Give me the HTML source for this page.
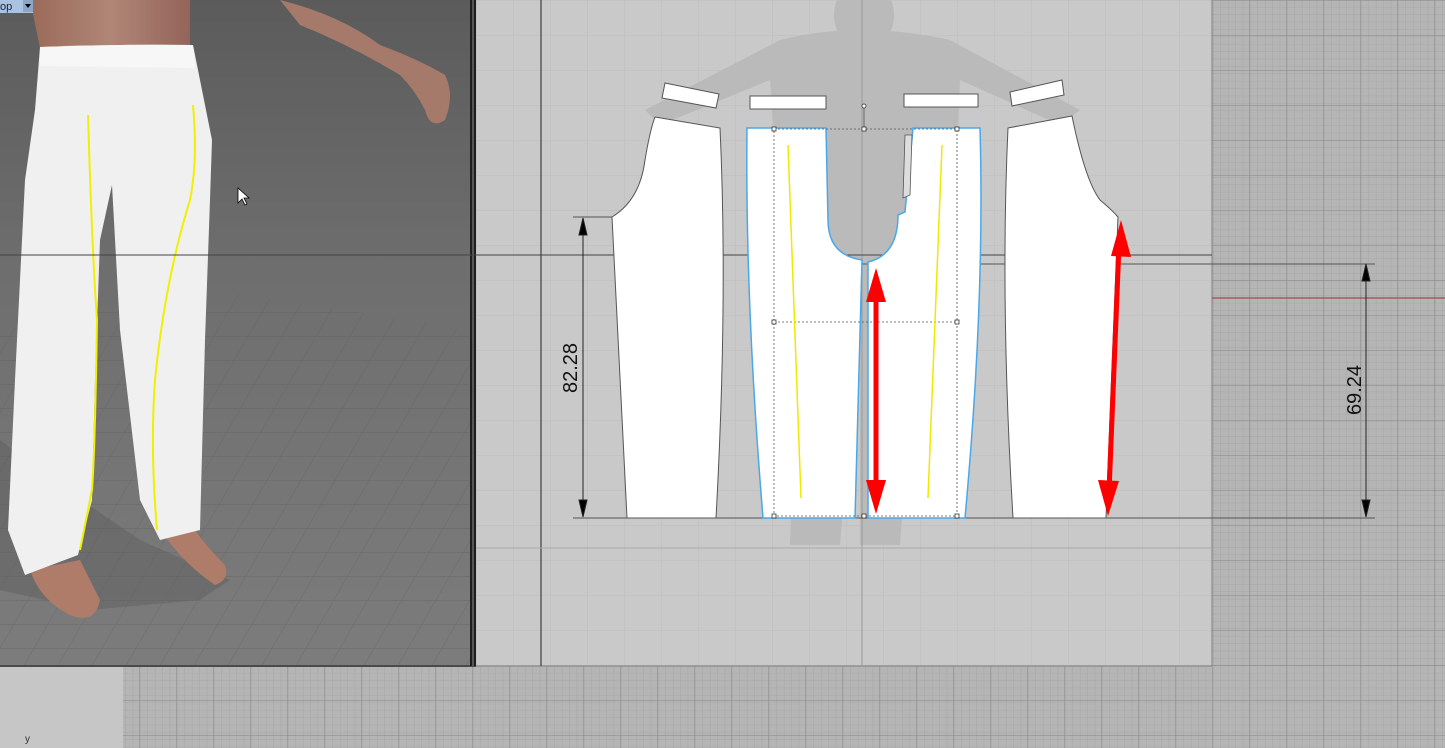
<!DOCTYPE html>
<html><head><meta charset="utf-8"><style>
html,body{margin:0;padding:0;width:1445px;height:748px;overflow:hidden;background:#c4c4c4}
svg{display:block}
</style></head><body>
<svg width="1445" height="748" viewBox="0 0 1445 748" xmlns="http://www.w3.org/2000/svg">
<defs>
<linearGradient id="bg3d" x1="0" y1="0" x2="0" y2="1">
<stop offset="0" stop-color="#5b5b5b"/><stop offset="0.4" stop-color="#6e6e6e"/><stop offset="1" stop-color="#7c7c7c"/>
</linearGradient>
<pattern id="fine" width="7.4" height="7.4" patternUnits="userSpaceOnUse">
<path d="M7.4 0V7.4M0 7.4H7.4" stroke="#9c9c9c" stroke-width="0.6" fill="none"/>
</pattern>
<pattern id="coarse" x="1212" y="0" width="37" height="35" patternUnits="userSpaceOnUse">
<path d="M0 0V35M0 0H37" stroke="#868686" stroke-width="1" fill="none"/>
</pattern>
<pattern id="light" x="476" y="0" width="37" height="35" patternUnits="userSpaceOnUse">
<path d="M0 0V35M0 0H37" stroke="#bdbdbd" stroke-width="1" fill="none"/>
</pattern>
<pattern id="floor" width="34" height="24" patternUnits="userSpaceOnUse" patternTransform="skewX(-30)">
<path d="M0 0V24M0 0H34" stroke="#5a5a5a" stroke-width="1" fill="none"/>
</pattern>
<linearGradient id="skin" x1="0" y1="0" x2="1" y2="0"><stop offset="0" stop-color="#9a6a58"/><stop offset="0.5" stop-color="#b08676"/><stop offset="1" stop-color="#94645a"/></linearGradient>
</defs>

<rect x="0" y="0" width="1445" height="748" fill="#b5b5b5"/>
<rect x="0" y="0" width="1445" height="748" fill="url(#fine)"/>
<rect x="0" y="0" width="1445" height="748" fill="url(#coarse)"/>
<rect x="0" y="666" width="123" height="82" fill="#c6c6c6"/>
<text x="25" y="742" font-family="Liberation Sans,sans-serif" font-size="10" fill="#333">y</text>

<!-- 3D viewport -->
<rect x="0" y="0" width="470" height="666" fill="url(#bg3d)"/>
<path d="M0 330 L220 290 L470 330 L470 666 L0 666Z" fill="url(#floor)" opacity="0.5"/>
<line x1="0" y1="666" x2="476" y2="666" stroke="#4a4a4a" stroke-width="2"/>
<path d="M30 0 L190 0 L190 45 L40 48Z" fill="url(#skin)"/>
<path d="M280 0 Q340 15 380 45 Q420 60 445 75 Q455 95 445 120 Q430 130 425 110 Q415 90 400 75 Q350 45 300 25Z" fill="#a57a6a"/>
<path d="M0 440 Q80 500 140 540 L230 580 L200 600 L90 610 L0 590Z" fill="#5e5e5e" opacity="0.45"/>
<path d="M30 570 Q40 600 70 615 Q95 625 100 600 Q90 580 80 560Z" fill="#b07c6a"/>
<path d="M160 530 Q185 565 215 585 Q230 580 225 565 Q205 545 195 530Z" fill="#b07c6a"/>
<path d="M40 47 Q115 44 193 45 L212 140 L210 200 L205 340 L200 530 L160 540 L140 500 L120 330 L112 185 L100 240 L95 380 L92 500 L78 555 L25 575 L8 530 L15 380 L25 180 L35 110Z" fill="#f0f0f0"/>
<path d="M40 47 Q115 44 193 45 L195 68 L40 66Z" fill="#f7f7f7"/>
<path d="M88 115 Q92 250 97 320 Q95 450 92 490 L80 550" stroke="#f0f000" stroke-width="2" fill="none"/>
<path d="M193 105 Q198 160 190 200 Q165 280 155 380 Q150 450 157 530" stroke="#f0f000" stroke-width="2" fill="none"/>
<path d="M238 188 L238 203 L242 199 L245 205 L247 204 L244 198 L249 198Z" fill="#fff" stroke="#000" stroke-width="0.8"/>
<rect x="0" y="0" width="33" height="13" fill="#a9c3e0"/>
<text x="0" y="10" font-family="Liberation Sans,sans-serif" font-size="11" fill="#223">op</text>
<rect x="23" y="0" width="10" height="12" fill="#8aa6c8"/><path d="M25 4 L31 4 L28 8Z" fill="#000"/>
<rect x="470" y="0" width="6" height="666" fill="#1e1e1e"/>
<rect x="472" y="0" width="2" height="666" fill="#555"/>

<!-- pattern panel -->
<rect x="476" y="0" width="736" height="666" fill="#c9c9c9"/>
<rect x="476" y="0" width="736" height="666" fill="url(#light)"/>
<line x1="1212" y1="0" x2="1212" y2="666" stroke="#808080"/>
<line x1="476" y1="666" x2="1212" y2="666" stroke="#808080"/>
<g fill="#bababa">
<ellipse cx="864" cy="15" rx="30" ry="35"/>
<path d="M780 40 Q860 20 950 40 L1080 110 L1060 125 L960 80 L955 210 L920 260 L900 545 L860 545 L860 300 L840 545 L790 545 L800 270 L780 210 L770 80 L660 125 L645 110Z"/>
</g>
<line x1="541" y1="0" x2="541" y2="666" stroke="#222"/>
<line x1="862" y1="0" x2="862" y2="666" stroke="#999"/>
<line x1="476" y1="548" x2="1212" y2="548" stroke="#aaa"/>
<line x1="0" y1="255" x2="1212" y2="255" stroke="#444"/>
<line x1="862" y1="264" x2="1375" y2="264" stroke="#555"/>
<line x1="573" y1="518" x2="1375" y2="518" stroke="#555"/>
<line x1="573" y1="217" x2="612" y2="217" stroke="#555"/>
<line x1="1212" y1="298" x2="1445" y2="298" stroke="#a03030"/>

<g fill="#fff" stroke="#555" stroke-width="1">
<path d="M665 83 L719 94 L716 108 L662 98Z"/>
<path d="M750 96 L826 96 L826 109 L750 109Z"/>
<path d="M904 94 L978 94 L978 107 L904 107Z"/>
<path d="M1010 92 L1062 80 L1064 95 L1012 106Z"/>
<path d="M655 117 L720 128 Q728 300 716 518 L627 518 Q618 340 612 217 Q640 200 645 160 Q650 130 655 117Z"/>
<path d="M1008 128 L1072 116 Q1085 180 1100 200 Q1112 210 1118 217 L1106 518 L1013 518 Q1000 300 1008 128Z"/>
</g>
<g fill="#fff" stroke="#4aa8e8" stroke-width="1.5">
<path d="M747 128 L826 128 L828 220 Q828 255 862 260 L855 518 L763 518 Q745 300 747 128Z"/>
<path d="M913 128 L980 128 Q985 300 965 518 L868 518 L868 262 Q898 255 898 215 L905 212 L913 128Z"/>
</g>
<path d="M905 135 L912 135 L910 195 L903 198Z" fill="#ddd" stroke="#555" stroke-width="0.8"/>
<g stroke="#555" stroke-dasharray="2,2" fill="none" stroke-width="0.8">
<rect x="774" y="129" width="183" height="387"/>
<line x1="774" y1="322" x2="957" y2="322"/>
</g>
<line x1="864" y1="106" x2="864" y2="129" stroke="#666"/>
<g fill="#fff" stroke="#333" stroke-width="0.8">
<rect x="772" y="127" width="4" height="4"/><rect x="862" y="127" width="4" height="4"/><rect x="955" y="127" width="4" height="4"/>
<rect x="772" y="320" width="4" height="4"/><rect x="955" y="320" width="4" height="4"/>
<rect x="772" y="514" width="4" height="4"/><rect x="862" y="514" width="4" height="4"/><rect x="955" y="514" width="4" height="4"/>
<circle cx="864" cy="106" r="2"/>
</g>
<line x1="788" y1="145" x2="801" y2="498" stroke="#f0e800" stroke-width="1.5"/>
<line x1="942" y1="145" x2="928" y2="498" stroke="#f0e800" stroke-width="1.5"/>

<g fill="#f00" stroke="#f00">
<line x1="876" y1="290" x2="876" y2="492" stroke-width="5"/>
<path d="M866 302 L876 268 L886 302Z" stroke="none"/>
<path d="M866 480 L876 514 L886 480Z" stroke="none"/>
<line x1="1119" y1="245" x2="1109" y2="492" stroke-width="5"/>
<path d="M1111 256 L1121 220 L1131 257Z" stroke="none"/>
<path d="M1098 480 L1108 516 L1119 481Z" stroke="none"/>
</g>

<g stroke="#222" fill="#000">
<line x1="583" y1="220" x2="583" y2="516"/>
<path d="M579 235 L583 218 L587 235Z"/><path d="M579 500 L583 517 L587 500Z"/>
<line x1="1366" y1="266" x2="1366" y2="516"/>
<path d="M1362 281 L1366 264 L1370 281Z"/><path d="M1362 500 L1366 517 L1370 500Z"/>
</g>
<text transform="translate(577,368) rotate(-90)" text-anchor="middle" font-family="Liberation Sans,sans-serif" font-size="20" fill="#111">82.28</text>
<text transform="translate(1361,390) rotate(-90)" text-anchor="middle" font-family="Liberation Sans,sans-serif" font-size="20" fill="#111">69.24</text>
</svg>
</body></html>
